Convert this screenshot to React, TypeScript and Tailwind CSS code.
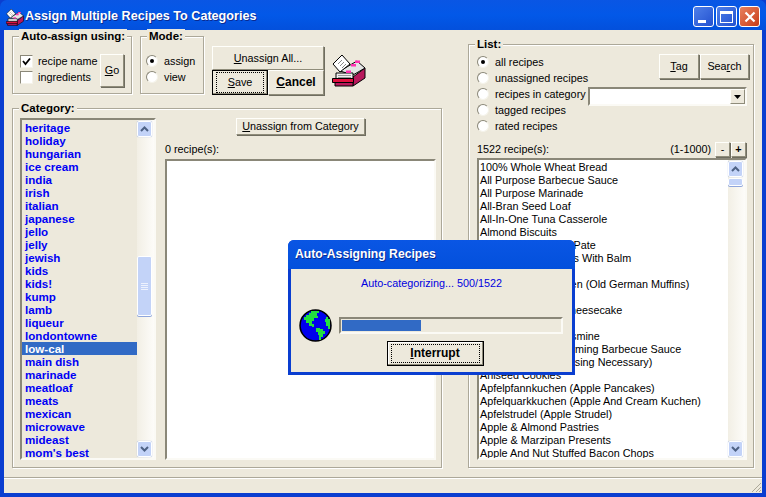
const cats = ["heritage","holiday","hungarian","ice cream","india","irish","italian","japanese","jello","jelly","jewish","kids","kids!","kump","lamb","liqueur","londontowne","low-cal","main dish","marinade","meatloaf","meats","mexican","microwave","mideast","mom's best"];
const recipes = ["100% Whole Wheat Bread","All Purpose Barbecue Sauce","All Purpose Marinade","All-Bran Seed Loaf","All-In-One Tuna Casserole","Almond Biscuits","Almond Mushroom Pate","Almond Marmalades With Balm","Almond Roca","Altdeutsche Brötchen (Old German Muffins)","Amaretti","Amaretto Cherry Cheesecake","Amish Roast Garlic","Amber Tea With Jasmine","American Style Warming Barbecue Sauce","Anadama Bread (Rising Necessary)","Aniseed Cookies","Apfelpfannkuchen (Apple Pancakes)","Apfelquarkkuchen (Apple And Cream Kuchen)","Apfelstrudel (Apple Strudel)","Apple & Almond Pastries","Apple & Marzipan Presents","Apple And Nut Stuffed Bacon Chops"];

const raised = "border border-t-[#fffffb] border-l-[#fffffb] border-b-[#8f8c7a] border-r-[#8f8c7a] bg-[#ede9dc]";
const sunken = "border-2 border-t-[#8a8778] border-l-[#8a8778] border-b-[#fbfaf5] border-r-[#fbfaf5]";

function Group({ title, className, children }: { title: string; className: string; children: React.ReactNode }) {
  return (
    <div className={`relative border border-[#aca899] shadow-[1px_1px_0_#fff,inset_1px_1px_0_#fff] ${className}`}>
      <span className="absolute left-[6px] top-[-8px] bg-[#ede9dc] px-[2px] text-[11.5px] leading-[14px] font-bold text-black">{title}</span>
      {children}
    </div>
  );
}

function Radio({ label, on }: { label: string; on?: boolean }) {
  return (
    <div className="flex h-[16px] items-center gap-[6px]">
      <span className="flex h-[12px] w-[12px] items-center justify-center rounded-full border border-t-[#8a8778] border-l-[#8a8778] border-b-[#f5f3ea] border-r-[#f5f3ea] bg-white">
        {on && <span className="h-[4px] w-[4px] rounded-full bg-black" />}
      </span>
      <span>{label}</span>
    </div>
  );
}

function Check({ label, on }: { label: string; on?: boolean }) {
  return (
    <div className="flex h-[16px] items-center gap-[5px]">
      <span className="flex h-[13px] w-[13px] items-center justify-center border border-t-[#8a8778] border-l-[#8a8778] border-b-[#f5f3ea] border-r-[#f5f3ea] bg-white">
        {on && (
          <svg width="9" height="9" viewBox="0 0 9 9"><path d="M1 4 L3.5 7 L8 1.5" fill="none" stroke="#000" strokeWidth="1.8" /></svg>
        )}
      </span>
      <span>{label}</span>
    </div>
  );
}

function Btn({ children, className = "" }: { children: React.ReactNode; className?: string }) {
  return <div className={`flex items-center justify-center ${raised} shadow-[1px_1px_0_#6f6d60] ${className}`}>{children}</div>;
}

function Arrow({ up }: { up?: boolean }) {
  return (
    <div className="flex h-[16px] w-[15px] items-center justify-center rounded-[2px] border border-white bg-[#c3d3f8] shadow-[0_0_1px_#8fa6dc]">
      <svg width="9" height="6" viewBox="0 0 9 6">
        <path d={up ? "M1 5 L4.5 1.5 L8 5" : "M1 1 L4.5 4.5 L8 1"} fill="none" stroke="#4d6185" strokeWidth="2" />
      </svg>
    </div>
  );
}

function Scrollbar({ thumbTop, thumbH, grip }: { thumbTop: number; thumbH: number; grip?: boolean }) {
  return (
    <div className="relative flex h-full w-[17px] flex-col justify-between bg-gradient-to-r from-[#f2efe5] to-[#fdfcf9] pb-[1px] pt-[1px]">
      <Arrow up />
      <Arrow />
      <div className="absolute left-0 flex w-[15px] flex-col items-center justify-center gap-[1px] rounded-[2px] border border-white bg-[#c3d3f8] shadow-[0_1px_0_#8fa6dc]" style={{ top: thumbTop, height: thumbH }}>
        {grip && (
          <>
            <span className="h-px w-[7px] bg-[#eef2fd]" />
            <span className="h-px w-[7px] bg-[#eef2fd]" />
            <span className="h-px w-[7px] bg-[#eef2fd]" />
            <span className="h-px w-[7px] bg-[#eef2fd]" />
          </>
        )}
      </div>
    </div>
  );
}

function Globe() {
  return (
    <svg width="33" height="33" viewBox="0 0 32 32" shapeRendering="crispEdges">
      <circle cx="16" cy="16" r="15" fill="#0000ee" stroke="#000" strokeWidth="1.5" shapeRendering="auto" />
      <path d="M12 2h7v2h-2v3h1v2h-3v3h-2v3h2v2h-2v-1h-3v-2H7v-3H5V8h2V6h3V4h2z" fill="#22e040" />
      <path d="M16 18h4v1h3v2h2v3h-2v3h-2v3h-2v-5h-1v-3h-2z" fill="#22e040" />
      <path d="M26 8h2v2h2v9h-2v-3h-2v-3h-1v-3h1z" fill="#22e040" />
    </svg>
  );
}

function CardFile({ size }: { size: number }) {
  return (
    <svg width={size} height={size} viewBox="0 0 34 34">
      <path d="M21 24 L33 15 V25 L21 33 Z" fill="#b8185c" stroke="#000" />
      <path d="M8 18 L25 8 L33 15 L21 22 Z" fill="#e4e4e4" stroke="#000" />
      <path d="M1 11 L10 2 L18 11 L8 19 Z" fill="#fff" stroke="#000" />
      <path d="M6 11 L10 7 M8 13 L12 9 M10 15 L14 11" stroke="#888" />
      <path d="M4 20 H21 V26 H4 Z" fill="#f0f0f0" stroke="#000" />
      <path d="M6 22.5 H19 M6 24.5 H19" stroke="#999" />
      <path d="M3 29 H21 V33 H3 Z" fill="#b8185c" stroke="#000" />
      <path d="M0.5 25.5 H21.5 V29.5 H0.5 Z" fill="#e01040" stroke="#000" />
      <path d="M23 7.5 H28 V10 H23 Z M19 11 H24 V13.5 H19 Z M14 17.5 H19 V20 H14 Z" fill="#ff30b0" />
    </svg>
  );
}

function CapBtn({ red, children }: { red?: boolean; children: React.ReactNode }) {
  return (
    <div className={`flex h-[21px] w-[21px] items-center justify-center rounded-[3px] border border-white ${red ? "bg-gradient-to-br from-[#e8805c] to-[#c83a14]" : "bg-gradient-to-br from-[#4f7fe8] to-[#2350d0]"}`}>
      {children}
    </div>
  );
}

function U({ children }: { children: React.ReactNode }) {
  return <span className="underline underline-offset-1">{children}</span>;
}

export default function App() {
  return (
    <div className="relative flex h-[497px] w-[766px] flex-col overflow-hidden whitespace-nowrap bg-[#0a3ed0] text-[10.8px] leading-[13px] text-black" style={{ fontFamily: '"Liberation Sans", Arial, sans-serif' }}>
      {/* Title bar */}
      <div className="flex h-[30px] shrink-0 items-center rounded-t-[7px] bg-gradient-to-b from-[#0a56e4] via-[#0258e8] to-[#0350dc] pl-[6px] pr-[6px] pt-[3px]">
        <CardFile size={18} />
        <span className="ml-[1px] text-[12.6px] font-bold text-white [text-shadow:1px_1px_0_#0a2a90]">Assign Multiple Recipes To Categories</span>
        <div className="ml-auto flex gap-[2px]">
          <CapBtn>
            <span className="mt-[10px] mr-[3px] h-[3px] w-[8px] bg-white" />
          </CapBtn>
          <CapBtn>
            <span className="h-[12px] w-[13px] border border-t-[3px] border-white" />
          </CapBtn>
          <CapBtn red>
            <svg width="12" height="12" viewBox="0 0 12 12"><path d="M1.5 1.5 L10.5 10.5 M10.5 1.5 L1.5 10.5" stroke="#fff" strokeWidth="2.2" /></svg>
          </CapBtn>
        </div>
      </div>

      {/* Client */}
      <div className="mx-[4px] mb-[4px] flex min-h-0 flex-1 flex-col bg-[#ede9dc]">
        <div className="flex h-[447px] shrink-0 pl-[8px] pr-[8px] pt-[6px]">
          {/* Left side */}
          <div className="flex w-[430px] shrink-0 flex-col">
            <div className="flex h-[58px] items-start">
              <Group title="Auto-assign using:" className="flex h-[58px] w-[120px] shrink-0 items-start pl-[7px] pr-[7px] pt-[16px]">
                <div className="flex flex-1 flex-col">
                  <Check label="recipe name" on />
                  <Check label="ingredients" />
                </div>
                <Btn className="mt-[1px] h-[33px] w-[24px]"><span><U>G</U>o</span></Btn>
              </Group>
              <Group title="Mode:" className="ml-[8px] flex h-[58px] w-[64px] shrink-0 flex-col pl-[5px] pt-[16px]">
                <Radio label="assign" on />
                <Radio label="view" />
              </Group>
              <div className="ml-[8px] mt-[10px] flex w-[113px] shrink-0 flex-col">
                <Btn className="h-[24px] w-[112px]"><span><U>U</U>nassign All...</span></Btn>
                <div className="flex">
                  <div className="flex h-[25px] w-[56px] items-center justify-center border border-black bg-[#ede9dc] shadow-[inset_-1px_-1px_0_#8f8c7a]">
                    <span className="border border-dotted border-black px-[11px] py-[3px]"><U>S</U>ave</span>
                  </div>
                  <Btn className="h-[25px] w-[56px]"><span className="text-[12px] font-bold"><U>C</U>ancel</span></Btn>
                </div>
              </div>
              <div className="ml-[7px] mt-[17px]"><CardFile size={34} /></div>
            </div>

            <Group title="Category:" className="mt-[14px] flex h-[360px] pl-[7px] pr-[5px] pt-[9px]">
              <div className={`flex h-[342px] w-[136px] shrink-0 ${sunken}`}>
                <div className="flex-1 pt-[1px] font-bold text-[#0000f5]">
                  {cats.map((c) => (
                    <div key={c} className={`h-[13px] pl-[3px] text-[11.6px] leading-[13px] ${c === "low-cal" ? "bg-[#316ac5] text-white" : ""}`}>{c}</div>
                  ))}
                </div>
                <Scrollbar thumbTop={136} thumbH={60} grip />
              </div>
              <div className="ml-[9px] flex min-w-0 flex-1 flex-col">
                <div className="flex h-[17px] justify-center">
                  <Btn className="h-[17px] w-[129px]"><span><U>U</U>nassign from Category</span></Btn>
                </div>
                <div className="mt-[6px] h-[16px] leading-[16px]">0 recipe(s):</div>
                <div className={`mt-[2px] h-[301px] bg-white ${sunken}`} />
              </div>
            </Group>
          </div>

          {/* Right side */}
          <div className="ml-[26px] mt-[8px] flex-1">
            <Group title="List:" className="h-[424px] pl-[8px] pr-[6px]">
              <div className="relative pt-[9px]">
                <Radio label="all recipes" on />
                <Radio label="unassigned recipes" />
                <div className="flex h-[16px] items-start">
                  <Radio label="recipes in category" />
                  <div className={`ml-auto mt-[1px] flex h-[19px] w-[159px] shrink-0 bg-white ${sunken}`}>
                    <div className="flex-1" />
                    <div className={`flex w-[15px] items-center justify-center ${raised}`}>
                      <svg width="7" height="4" viewBox="0 0 7 4"><path d="M0 0h7L3.5 4z" fill="#000" /></svg>
                    </div>
                  </div>
                </div>
                <Radio label="tagged recipes" />
                <Radio label="rated recipes" />
                <div className="absolute right-[-2px] top-[9px] flex">
                  <Btn className="h-[25px] w-[40px]"><span><U>T</U>ag</span></Btn>
                  <Btn className="ml-[1px] h-[25px] w-[49px]"><span>Sea<U>r</U>ch</span></Btn>
                </div>
              </div>
              <div className="mt-[7px] flex h-[17px] items-center">
                <span>1522 recipe(s):</span>
                <span className="ml-auto mr-[4px]">(1-1000)</span>
                <Btn className="h-[15px] w-[15px]">-</Btn>
                <Btn className="ml-[1px] mr-[1px] h-[15px] w-[15px] font-bold">+</Btn>
              </div>
              <div className={`flex h-[302px] ${sunken}`}>
                <div className="min-w-0 flex-1 overflow-hidden bg-white pt-[1px]">
                  {recipes.map((r, i) => (
                    <div key={i} className="h-[13px] pl-[1px] leading-[13px]">{r}</div>
                  ))}
                </div>
                <Scrollbar thumbTop={18} thumbH={8} />
              </div>
            </Group>
          </div>
        </div>

        {/* Status bar */}
        <div className="relative flex-1 border-t border-[#aca899] shadow-[inset_0_1px_0_#fff]">
          <svg className="absolute bottom-0 right-0" width="12" height="12" viewBox="0 0 12 12"><path d="M11 2 L2 11 M11 6 L6 11 M11 9 L9 11" stroke="#aca899" strokeWidth="1" /></svg>
        </div>
      </div>

      {/* Dialog */}
      <div className="absolute left-[288px] top-[240px] flex h-[135px] w-[287px] flex-col rounded-t-[6px] bg-[#0a3ed0] px-[3px] pb-[3px]">
        <div className="-mx-[3px] flex h-[29px] shrink-0 items-center rounded-t-[6px] bg-gradient-to-b from-[#0a56e4] to-[#0350dc] pl-[7px] text-[12.2px] font-bold text-white [text-shadow:1px_1px_0_#0a2a90]">Auto-Assigning Recipes</div>
        <div className="flex flex-1 flex-col bg-[#ede9dc]">
          <div className="mt-[7px] text-center leading-[14px] text-[#0000e0]">Auto-categorizing... 500/1522</div>
          <div className="mt-[19px] flex items-center pl-[8px] pr-[9px]">
            <Globe />
            <div className={`ml-[7px] flex h-[17px] flex-1 bg-[#ede9dc] p-[1px] ${sunken}`}>
              <div className="h-full w-[79px] bg-[#316ac5]" />
            </div>
          </div>
          <div className="-mt-[1px] flex justify-center pl-[7px]">
            <div className="flex h-[25px] w-[97px] items-center justify-center border border-black bg-[#ede9dc] shadow-[inset_-1px_-1px_0_#8f8c7a,inset_1px_1px_0_#fff]">
              <span className="flex h-[19px] w-[89px] items-center justify-center border border-dotted border-black text-[12px] font-bold"><U>I</U>nterrupt</span>
            </div>
          </div>
        </div>
      </div>
    </div>
  );
}
